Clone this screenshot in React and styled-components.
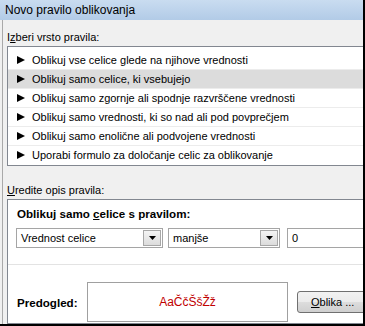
import React from "react";
import styled, { createGlobalStyle } from "styled-components";

const Global = createGlobalStyle`
  html, body { margin: 0; padding: 0; background: #ffffff; }
  body { font-family: "Liberation Sans", Arial, sans-serif; font-size: 11px; color: #000; }
  * { box-sizing: border-box; }
`;

const Frame = styled.div`
  width: 365px;
  height: 326px;
  display: flex;
  flex-direction: column;
  overflow: hidden;
  border-right: 2px solid #000;
  border-bottom: 2px solid #000;
  background: #f0f0f0;
`;

const TitleBar = styled.div`
  height: 20px;
  flex: none;
  display: flex;
  align-items: center;
  padding-left: 5px;
  font-size: 12px;
  background: linear-gradient(#c9dcf0, #b2cbe7);
`;

const Body = styled.div`
  flex: 1;
  min-height: 0;
  margin-left: 2px;
  border-left: 1px solid #a9a9a9;
  padding: 9px 0 0 4px;
  display: flex;
  flex-direction: column;
  overflow: hidden;
`;

const Label = styled.div`
  line-height: 16px;
  height: 16px;
  margin-top: ${(p) => p.$top || 0}px;
  white-space: nowrap;
  u { text-decoration: underline; }
`;

const ListBox = styled.div`
  margin-top: 1px;
  width: 380px;
  flex: none;
  background: #fff;
  border: 1px solid #828790;
  padding-top: 4px;
`;

const Row = styled.div`
  height: 19px;
  display: flex;
  align-items: center;
  padding-left: 9px;
  gap: 7px;
  white-space: nowrap;
  border-bottom: 1px solid ${(p) => (p.$last ? "transparent" : "#ececec")};
  background: ${(p) => (p.$selected ? "#dcdcdc" : "transparent")};
`;

const Tri = () => (
  <svg width="8" height="8" viewBox="0 0 8 8">
    <polygon points="0,0 8,4 0,8" fill="#000" />
  </svg>
);

const RuleBox = styled.div`
  margin-top: 1px;
  width: 380px;
  flex: 1;
  background: #fff;
  border: 1px solid #828790;
  padding-top: 6px;
  display: flex;
  flex-direction: column;
`;

const Heading = styled.div`
  font-weight: bold;
  font-size: 11.6px;
  line-height: 16px;
  padding-left: 9px;
  white-space: nowrap;
  u { text-decoration: underline; }
`;

const Controls = styled.div`
  margin-top: 6px;
  padding-left: 8px;
  display: flex;
  align-items: center;
`;

const Select = styled.div`
  flex: none;
  width: ${(p) => p.$w}px;
  margin-right: ${(p) => p.$gap}px;
  height: 20px;
  border: 1px solid #a5a5a5;
  background: #fff;
  display: flex;
  align-items: center;
  justify-content: space-between;
  padding: 0 1px 0 4px;
  white-space: nowrap;
`;

const ArrowBtn = styled.div`
  width: 18px;
  height: 16px;
  border: 1px solid #a7a7a7;
  background: linear-gradient(#f4f4f4, #dcdcdc);
  display: flex;
  align-items: center;
  justify-content: center;
`;

const Input = styled.div`
  width: 200px;
  flex: none;
  height: 20px;
  border: 1px solid #a5a5a5;
  background: #fff;
  display: flex;
  align-items: center;
  padding-left: 4px;
`;

const Separator = styled.div`
  margin-top: 16px;
  height: 1px;
  background: #e3e3e3;
`;

const PreviewRow = styled.div`
  margin-top: 17px;
  padding-left: 9px;
  display: flex;
  align-items: center;
`;

const PreviewLabel = styled.div`
  font-weight: bold;
  font-size: 11.6px;
  width: 70px;
  flex: none;
`;

const PreviewBox = styled.div`
  flex: none;
  width: 201px;
  height: 40px;
  border: 1px solid #a0a0a0;
  display: flex;
  align-items: center;
  justify-content: center;
  color: #c00000;
  font-size: 12px;
`;

const Button = styled.div`
  flex: none;
  margin-left: 9px;
  width: 82px;
  height: 22px;
  border: 1px solid #707070;
  border-radius: 3px;
  background: linear-gradient(#f2f2f2 0%, #ebebeb 50%, #dddddd 51%, #cfcfcf 100%);
  display: flex;
  align-items: center;
  padding-left: 13px;
  white-space: nowrap;
  u { text-decoration: underline; }
`;

const Caret = () => (
  <svg width="7" height="4" viewBox="0 0 7 4">
    <polygon points="0,0 7,0 3.5,4" fill="#000" />
  </svg>
);

const rows = [
  "Oblikuj vse celice glede na njihove vrednosti",
  "Oblikuj samo celice, ki vsebujejo",
  "Oblikuj samo zgornje ali spodnje razvrščene vrednosti",
  "Oblikuj samo vrednosti, ki so nad ali pod povprečjem",
  "Oblikuj samo enolične ali podvojene vrednosti",
  "Uporabi formulo za določanje celic za oblikovanje",
];

export default function App() {
  return (
    <>
      <Global />
      <Frame>
        <TitleBar>Novo pravilo oblikovanja</TitleBar>
        <Body>
          <Label>
            I<u>z</u>beri vrsto pravila:
          </Label>
          <ListBox>
            {rows.map((r, i) => (
              <Row key={i} $selected={i === 1} $last={i === rows.length - 1}>
                <Tri />
                <span>{r}</span>
              </Row>
            ))}
          </ListBox>
          <Label $top={16}>
            <u>U</u>redite opis pravila:
          </Label>
          <RuleBox>
            <Heading>
              Oblikuj samo <u>c</u>elice s pravilom:
            </Heading>
            <Controls>
              <Select $w={147} $gap={5}>
                <span>Vrednost celice</span>
                <ArrowBtn>
                  <Caret />
                </ArrowBtn>
              </Select>
              <Select $w={112} $gap={7}>
                <span>manjše</span>
                <ArrowBtn>
                  <Caret />
                </ArrowBtn>
              </Select>
              <Input>0</Input>
            </Controls>
            <Separator />
            <PreviewRow>
              <PreviewLabel>Predogled:</PreviewLabel>
              <PreviewBox>AaČčŠšŽž</PreviewBox>
              <Button>
                <span>
                  <u>O</u>blika ...
                </span>
              </Button>
            </PreviewRow>
          </RuleBox>
        </Body>
      </Frame>
    </>
  );
}
